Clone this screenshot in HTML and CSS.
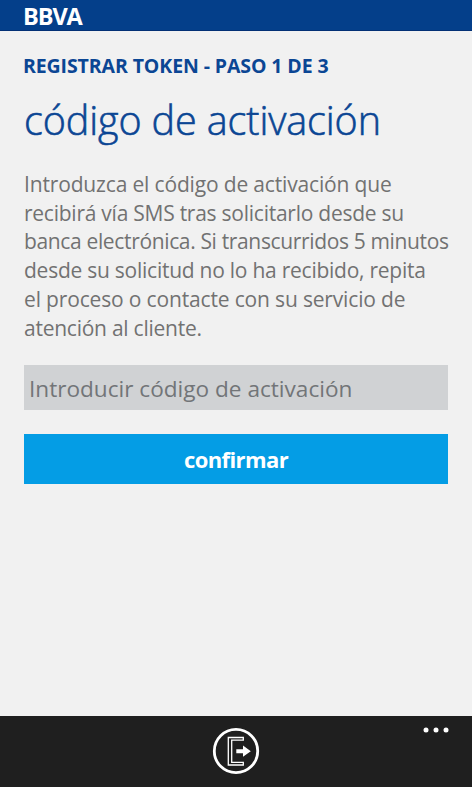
FILE: index.html
```html
<!DOCTYPE html>
<html lang="es">
<head>
<meta charset="utf-8">
<title>BBVA</title>
<link rel="stylesheet" href="styles.css">
</head>
<body>
<header class="topbar"><span class="logo">BBVA</span></header>
<main class="content">
  <h2 class="step">REGISTRAR TOKEN - PASO 1 DE 3</h2>
  <h1 class="title">código de activación</h1>
  <p class="intro">
    <span class="line loose">Introduzca el código de activación que</span>
    <span class="line">recibirá vía SMS tras solicitarlo desde su</span>
    <span class="line tight">banca electrónica. Si transcurridos 5 minutos</span>
    <span class="line">desde su solicitud no lo ha recibido, repita</span>
    <span class="line loose">el proceso o contacte con su servicio de</span>
    <span class="line">atención al cliente.</span>
  </p>
  <div class="field"><span class="placeholder">Introducir código de activación</span></div>
  <button class="confirm"><span>confirmar</span></button>
</main>
<footer class="appbar">
  <svg class="exit" viewBox="0 0 48 48" width="48" height="48">
    <circle cx="24" cy="24" r="21.7" fill="none" stroke="#fff" stroke-width="2.8"/>
    <path d="M31.3 10.5H16.3V38H31.3V35.3H19.7V13.2H31.3Z" fill="none" stroke="#fff" stroke-width="1.3"/>
    <path d="M24.3 22.2H31V18.6L38.8 24.2L31 29.8V26.2H24.3Z" fill="#fff"/>
  </svg>
  <svg class="more" viewBox="0 0 26 6" width="26" height="6">
    <g fill="#fff"><circle cx="3" cy="3" r="2.5"/><circle cx="13" cy="3" r="2.5"/><circle cx="23" cy="3" r="2.5"/></g>
  </svg>
</footer>
</body>
</html>
```
FILE: styles.css
```css
* { box-sizing: border-box; }
body {
  margin: 0;
  height: 787px;
  display: flex;
  flex-direction: column;
  overflow: hidden;
  background: #f1f1f1;
  font-family: "Open Sans", "Noto Sans", sans-serif;
}
.topbar {
  height: 31px;
  flex: none;
  padding-left: 23px;
  background: #043f8a;
  border-bottom: 1px solid #033075;
}
.logo {
  display: block;
  font-size: 23.5px;
  line-height: 32px;
  font-weight: 700;
  letter-spacing: -1.1px;
  color: #fff;
}
.content { flex: 1; padding: 22px 24px 0; white-space: nowrap; }
.step {
  margin: 0 0 0 -1px;
  font-size: 19.5px;
  line-height: 26px;
  font-weight: 700;
  letter-spacing: -0.1px;
  color: #0b4694;
}
.title {
  margin: 14px 0 0;
  font-size: 39.5px;
  line-height: 54px;
  font-weight: 300;
  letter-spacing: -0.1px;
  color: #0b4694;
  -webkit-text-stroke: 0.6px #0b4694;
}
.intro {
  margin: 23px 0 0;
  font-size: 21px;
  line-height: 28.7px;
  letter-spacing: -0.25px;
  color: #727272;
}
.line { display: block; }
.loose { letter-spacing: -0.16px; }
.tight { letter-spacing: -0.35px; }
.field {
  height: 45px;
  margin-top: 23px;
  padding-left: 5px;
  background: #d0d2d4;
  color: #727578;
  font-size: 22.6px;
  line-height: 48px;
}
.confirm {
  display: block;
  width: 100%;
  height: 50px;
  margin-top: 24px;
  padding: 0;
  border: 0;
  background: #049de5;
  color: #fff;
  font: 700 22px/50px "Open Sans", sans-serif;
  letter-spacing: -0.6px;
}
.appbar {
  position: relative;
  flex: none;
  height: 71px;
  background: #1f1f1f;
  display: flex;
  justify-content: center;
  padding-top: 11px;
}
.more { position: absolute; right: 23px; top: 11px; }
```
